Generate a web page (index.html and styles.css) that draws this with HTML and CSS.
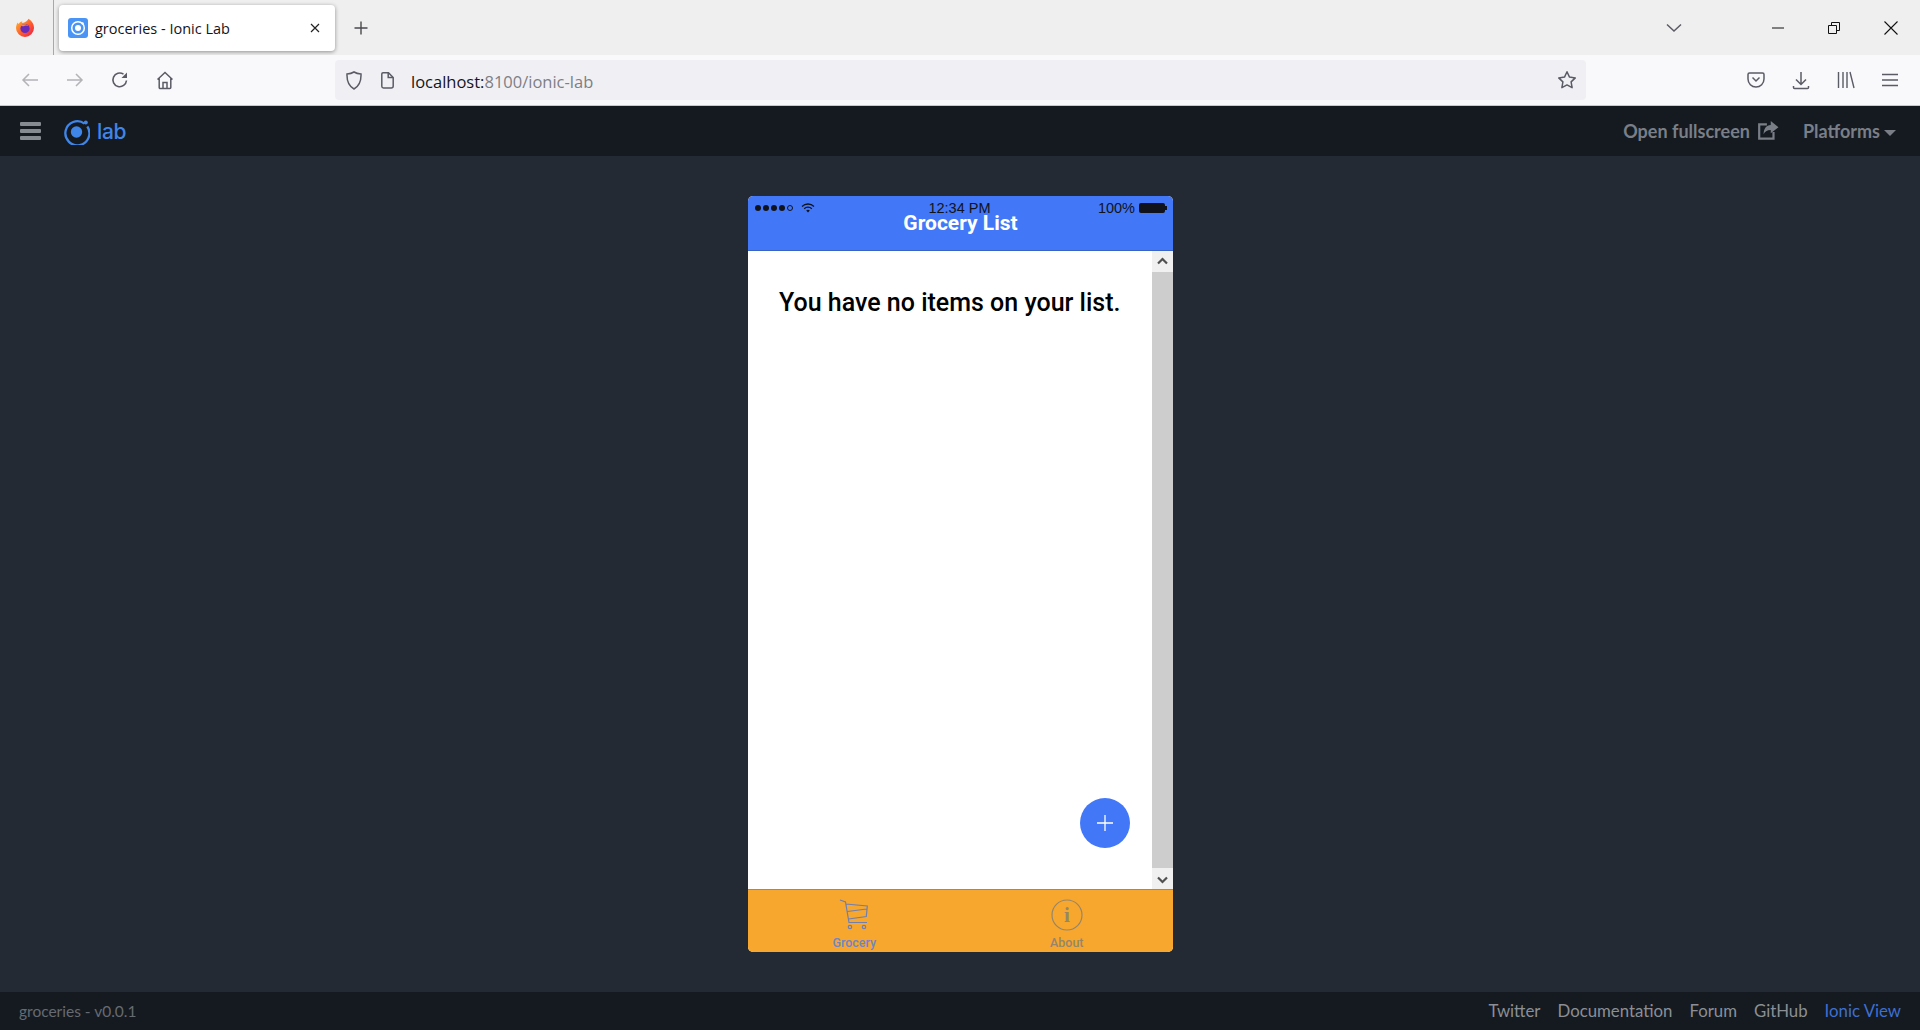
FILE: index.html
```html
<!DOCTYPE html>
<html lang="en">
<head>
    <meta charset="UTF-8">
    <meta name="viewport" content="width=device-width, initial-scale=1.0">
    <title>groceries - Ionic Lab</title>
    <link rel="stylesheet" href="styles.css">
</head>
<body>
    <div class="tabstrip">
        <div class="ff-slot">
            <svg width="20" height="20" viewBox="0 0 20 20">
                <defs>
                    <linearGradient id="ffg" x1="0" y1="0" x2="1" y2="1">
                        <stop offset="0" stop-color="#ffbd2e"/>
                        <stop offset="0.55" stop-color="#ff5a2c"/>
                        <stop offset="1" stop-color="#e5194f"/>
                    </linearGradient>
                </defs>
                <path d="M13.5 .8c2.600 1.500 5.500 4.700 5.500 9.200a9 9 0 0 1-18 0c0-2.200.8-4.400 1.800-5.600l.6 1.700c.9-1.400 2.300-2.400 4-2.900-.5.8-.6 1.400-.5 1.900 1.900-.5 4.700-.8 6.600-4.300z" fill="url(#ffg)"/>
                <circle cx="10" cy="10.500" r="4.600" fill="#6a2bb8"/>
                <path d="M5.500 8c2-2.300 6-2.500 8 0-2-.9-3.500-.8-5 .2z" fill="#ff8a1f"/>
            </svg>
        </div>
        <div class="tab">
            <svg class="tab-icon" width="20" height="20" viewBox="0 0 20 20">
                <rect width="20" height="20" rx="3" fill="#4a94f5"/>
                <circle cx="10" cy="10" r="6.300" fill="none" stroke="#fff" stroke-width="1.500"/>
                <circle cx="10" cy="10" r="3" fill="#fff"/>
                <circle cx="14.600" cy="5.400" r="1.200" fill="#fff"/>
            </svg>
            <span class="tab-title">groceries - Ionic Lab</span>
            <svg class="tab-close" width="12" height="12" viewBox="0 0 12 12"><path d="M2 2l8 8M10 2l-8 8" stroke="#222" stroke-width="1.200"/></svg>
        </div>
        <svg class="new-tab" width="16" height="16" viewBox="0 0 16 16"><path d="M8 1.500v13M1.500 8h13" stroke="#4a4a4f" stroke-width="1.400"/></svg>
        <div class="strip-space"></div>
        <svg class="tab-list" width="16" height="10" viewBox="0 0 16 10"><path d="M1 1.500l7 6.500 7-6.500" fill="none" stroke="#5b5b66" stroke-width="1.500"/></svg>
        <div class="win-btns">
            <svg width="12" height="12" viewBox="0 0 12 12"><path d="M0 6h12" stroke="#111" stroke-width="1"/></svg>
            <svg width="12" height="12" viewBox="0 0 12 12"><path d="M.5 3.500h8v8h-8zM3.500 3.500v-3h8v8h-3" fill="none" stroke="#111" stroke-width="1"/></svg>
            <svg width="14" height="14" viewBox="0 0 14 14"><path d="M.5 .5l13 13M13.500 .5l-13 13" stroke="#111" stroke-width="1.100"/></svg>
        </div>
    </div>

    <div class="navbar">
        <div class="nav-btns">
            <svg class="dim" width="18" height="16" viewBox="0 0 18 16"><path d="M17 8H2M8 2L2 8l6 6" fill="none" stroke="#b3b3b8" stroke-width="1.500"/></svg>
            <svg class="dim" width="18" height="16" viewBox="0 0 18 16"><path d="M1 8h15M10 2l6 6-6 6" fill="none" stroke="#b3b3b8" stroke-width="1.500"/></svg>
            <svg width="18" height="18" viewBox="0 0 18 18"><path d="M15.500 9.500A6.800 6.800 0 1 1 12.500 3.200" fill="none" stroke="#5b5b66" stroke-width="1.600"/><path d="M16 1.500v5.500h-5.500z" fill="#5b5b66"/></svg>
            <svg width="18" height="19" viewBox="0 0 18 19"><path d="M1.500 8.500L9 1.500l7.500 7M3.200 7.500v9a1 1 0 0 0 1 1h9.600a1 1 0 0 0 1-1v-9M7 17.500v-6h4v6" fill="none" stroke="#5b5b66" stroke-width="1.500"/></svg>
        </div>
        <div class="urlbar">
            <svg class="shield" width="16" height="19" viewBox="0 0 16 19"><path d="M8 1c2 1.300 4.300 1.900 7 2 .3 7-1.800 12-7 15C2.800 15 .7 10 1 3c2.700-.1 5-.7 7-2z" fill="none" stroke="#5b5b66" stroke-width="1.500"/></svg>
            <svg class="pageicon" width="13" height="17" viewBox="0 0 13 17"><path d="M2 .8h5.500L12.200 5.500V14a2 2 0 0 1-2 2H2.500a1.700 1.700 0 0 1-1.700-1.700V2A1.200 1.200 0 0 1 2 .8z" fill="none" stroke="#5b5b66" stroke-width="1.500"/><path d="M7.200 1v4.500h4.800" fill="none" stroke="#5b5b66" stroke-width="1.500"/></svg>
            <span class="url"><span class="host">localhost:</span>8100/ionic-lab</span>
            <svg class="star" width="20" height="20" viewBox="0 0 20 20"><path d="M10 1.800l2.500 5.300 5.800.8-4.200 4 1 5.800-5.100-2.800-5.100 2.800 1-5.800-4.200-4 5.800-.8z" fill="none" stroke="#5b5b66" stroke-width="1.500" stroke-linejoin="round"/></svg>
        </div>
        <div class="tool-btns">
            <svg width="18" height="16" viewBox="0 0 18 16"><path d="M2.500 1h13A1.500 1.500 0 0 1 17 2.500V7a8 8 0 0 1-16 0V2.500A1.500 1.500 0 0 1 2.500 1z" fill="none" stroke="#5b5b66" stroke-width="1.500"/><path d="M5.500 5.500L9 9l3.500-3.500" fill="none" stroke="#5b5b66" stroke-width="1.500"/></svg>
            <svg width="18" height="19" viewBox="0 0 18 19"><path d="M9 1v12M4 8.500l5 5 5-5M1.500 15v1.500a1 1 0 0 0 1 1h13a1 1 0 0 0 1-1V15" fill="none" stroke="#5b5b66" stroke-width="1.500"/></svg>
            <svg width="18" height="18" viewBox="0 0 18 18"><path d="M1.500 1v16M6 1v16M10 1v16M13 1l4 16" fill="none" stroke="#5b5b66" stroke-width="1.400"/></svg>
            <svg width="16" height="14" viewBox="0 0 16 14"><path d="M0 1.500h16M0 7h16M0 12.500h16" stroke="#5b5b66" stroke-width="1.400"/></svg>
        </div>
    </div>

    <header class="lab-header">
        <div class="burger"><span></span><span></span><span></span></div>
        <svg class="lab-logo" width="27" height="27" viewBox="0 0 27 27">
            <path d="M21.500 5.600A12 12 0 1 0 24.300 8.500" fill="none" stroke="#3f86e8" stroke-width="2.300"/>
            <circle cx="13.500" cy="14" r="5.700" fill="#3f86e8"/>
            <circle cx="22.800" cy="4.500" r="2" fill="#3f86e8"/>
        </svg>
        <span class="lab-word">lab</span>
        <div class="header-right">
            <span class="head-link">Open fullscreen
                <svg width="22" height="20" viewBox="0 0 20 18"><path d="M9 3H2v13h13v-6" fill="none" stroke="#7a7f87" stroke-width="2"/><path d="M12.500 0l7 5.500-7 5.500V8C9 8 7 9.500 6 12c0-5 2.500-8.500 6.500-8.500z" fill="#7a7f87"/></svg>
            </span>
            <span class="head-link">Platforms<i class="caret"></i></span>
        </div>
    </header>

    <main class="stage">
        <div class="device">
            <div class="status-bar">
                <span class="signal"><i></i><i></i><i></i><i></i><i class="off"></i>
                    <svg width="14" height="10" viewBox="0 0 14 10"><path d="M1 3.500a8.500 8.500 0 0 1 12 0M3.200 5.700a5.400 5.400 0 0 1 7.600 0" fill="none" stroke="#10131c" stroke-width="1.300"/><path d="M5.200 7.600a2.600 2.600 0 0 1 3.600 0L7 9.500z" fill="#10131c"/></svg>
                </span>
                <span class="clock">12:34 PM</span>
                <span class="battery">100%<i class="batt"></i></span>
            </div>
            <div class="dev-title">Grocery List</div>
            <div class="dev-content">
                <div class="page">
                    <h2 class="empty-msg">You have no items on your list.</h2>
                    <div class="fab"><svg width="16" height="16" viewBox="0 0 16 16"><path d="M8 0v16M0 8h16" stroke="#fff" stroke-width="1.300"/></svg></div>
                </div>
                <div class="scrollbar">
                    <div class="sb-btn"><svg width="11" height="8" viewBox="0 0 11 8"><path d="M1 6.500l4.500-4.500 4.500 4.500" fill="none" stroke="#505050" stroke-width="2.200"/></svg></div>
                    <div class="sb-thumb"></div>
                    <div class="sb-btn"><svg width="11" height="8" viewBox="0 0 11 8"><path d="M1 1.500l4.500 4.500 4.500-4.500" fill="none" stroke="#505050" stroke-width="2.200"/></svg></div>
                </div>
            </div>
            <nav class="dev-tabs">
                <div class="dev-tab active">
                    <svg width="32" height="32" viewBox="0 0 32 32"><path d="M2 1l5.500 2 3.500 20.500h18M7.800 5l21.500 2-1 10.500L10.500 20M9.300 12.500l19.500-2.500" fill="none" stroke="#6f7fb0" stroke-width="1.200"/><circle cx="12" cy="28" r="1.700" fill="none" stroke="#6f7fb0" stroke-width="1.200"/><circle cx="26" cy="28" r="1.700" fill="none" stroke="#6f7fb0" stroke-width="1.200"/></svg>
                    <span>Grocery</span>
                </div>
                <div class="dev-tab">
                    <svg width="32" height="32" viewBox="0 0 32 32"><circle cx="16" cy="16" r="15" fill="none" stroke="#95866a" stroke-width="1.200"/><text x="16" y="23" text-anchor="middle" class="info-i">i</text></svg>
                    <span>About</span>
                </div>
            </nav>
        </div>
    </main>

    <footer class="lab-footer">
        <span class="version">groceries - v0.0.1</span>
        <div class="foot-links">
            <span>Twitter</span>
            <span>Documentation</span>
            <span>Forum</span>
            <span>GitHub</span>
            <span class="ionic-view">Ionic View</span>
        </div>
    </footer>
</body>
</html>
```

FILE: styles.css
```css
* {
    box-sizing: border-box;
}
html, body {
    height: 100%;
}
body {
    margin: 0;
    height: 1030px;
    overflow: hidden;
    display: flex;
    flex-direction: column;
    background-color: #232a33;
    font-family: "Open Sans", sans-serif;
}
svg {
    display: block;
    flex: none;
}

/* browser chrome */
.tabstrip {
    height: 55px;
    background-color: #efefef;
    display: flex;
    align-items: center;
}
.ff-slot {
    width: 54px;
    height: 55px;
    border-right: 1px solid #a8a8a8;
    padding-left: 15px;
    display: flex;
    align-items: center;
}
.tab {
    width: 276px;
    height: 46px;
    margin-left: 5px;
    margin-top: 1px;
    background-color: #fff;
    border-radius: 4px;
    box-shadow: 0 1px 4px rgba(0, 0, 0, 0.4);
    display: flex;
    align-items: center;
    padding-left: 9px;
}
.tab-title {
    margin-left: 7px;
    font-size: 14.5px;
    color: #15141a;
    flex: 1;
}
.tab-close {
    margin-right: 14px;
}
.new-tab {
    margin-left: 18px;
}
.strip-space {
    flex: 1;
}
.tab-list {
    margin-right: 90px;
}
.win-btns {
    display: flex;
    align-items: center;
    gap: 44px;
    padding-right: 22px;
}
.navbar {
    height: 51px;
    background-color: #f9f9fb;
    border-bottom: 1px solid #c9c9cc;
    display: flex;
    align-items: center;
}
.nav-btns {
    width: 335px;
    padding-left: 21px;
    display: flex;
    align-items: center;
    gap: 27px;
}
.urlbar {
    width: 1251px;
    height: 40px;
    background-color: #f0f0f4;
    border-radius: 4px;
    display: flex;
    align-items: center;
    padding-left: 11px;
}
.pageicon {
    margin-left: 19px;
}
.url {
    margin-left: 17px;
    padding-top: 2px;
    font-size: 16.5px;
    color: #7e7e85;
    flex: 1;
}
.host {
    color: #15141a;
}
.star {
    margin-right: 9px;
}
.tool-btns {
    flex: 1;
    display: flex;
    align-items: center;
    justify-content: flex-end;
    gap: 27px;
    padding-right: 22px;
}

/* ionic lab header */
.lab-header {
    height: 50px;
    background-color: #151a21;
    display: flex;
    align-items: center;
    padding-left: 20px;
    padding-right: 24px;
}
.burger {
    width: 21px;
    display: flex;
    flex-direction: column;
    gap: 3px;
}
.burger span {
    height: 4px;
    border-radius: 1px;
    background-color: #868b92;
}
.lab-logo {
    margin-left: 22px;
}
.lab-word {
    margin-left: 7px;
    font-family: "Inter", sans-serif;
    font-size: 21px;
    font-weight: 500;
    color: #3f86e8;
    letter-spacing: -0.3px;
}
.header-right {
    margin-left: auto;
    display: flex;
    align-items: center;
    gap: 24px;
}
.head-link {
    font-family: "Lato", sans-serif;
    font-size: 18px;
    font-weight: 700;
    color: #7a7f87;
    display: flex;
    align-items: center;
    gap: 7px;
}
.caret {
    width: 0;
    height: 0;
    margin-left: -3px;
    margin-top: 4px;
    border-left: 6px solid transparent;
    border-right: 6px solid transparent;
    border-top: 6px solid #7a7f87;
}

/* device preview */
.stage {
    flex: 1;
    padding-top: 40px;
    display: flex;
    justify-content: center;
}
.device {
    position: relative;
    left: 0.5px;
    width: 425px;
    height: 756px;
    border-radius: 5px;
    overflow: hidden;
    display: flex;
    flex-direction: column;
    background-color: #fff;
}
.status-bar {
    position: absolute;
    top: 2px;
    left: 0;
    right: 0;
    height: 20px;
    padding: 0 8px 0 7px;
    display: flex;
    justify-content: space-between;
    align-items: center;
    font-family: "Liberation Sans", sans-serif;
    font-size: 14.5px;
    color: #10131c;
}
.signal {
    width: 100px;
    display: flex;
    align-items: center;
    gap: 2px;
}
.signal i {
    width: 6px;
    height: 6px;
    border-radius: 50%;
    background-color: #10131c;
}
.signal i.off {
    background-color: transparent;
    border: 1px solid #10131c;
}
.signal svg {
    margin-left: 6px;
}
.clock {
    margin-left: -1px;
}
.battery {
    width: 100px;
    display: flex;
    justify-content: flex-end;
    align-items: center;
    gap: 4px;
}
.batt {
    position: relative;
    width: 26px;
    height: 10px;
    border-radius: 2px;
    background-color: #10131c;
}
.batt::after {
    content: "";
    position: absolute;
    right: -2px;
    top: 3px;
    width: 2px;
    height: 4px;
    background-color: #10131c;
}
.dev-title {
    height: 55px;
    padding-top: 14px;
    background-color: #4277f8;
    border-bottom: 1px solid #3a64c4;
    font-family: Roboto, sans-serif;
    font-size: 21px;
    font-weight: 700;
    line-height: 27px;
    color: #fff;
    text-align: center;
}
.dev-content {
    flex: 1;
    display: flex;
    min-height: 0;
}
.page {
    flex: 1;
    position: relative;
    padding: 36px 0 0 31px;
}
.empty-msg {
    margin: 0;
    font-family: Roboto, sans-serif;
    font-size: 25px;
    font-weight: 500;
    line-height: 31px;
    color: #000;
    white-space: nowrap;
}
.fab {
    position: absolute;
    right: 22px;
    bottom: 41px;
    width: 50px;
    height: 50px;
    border-radius: 50%;
    background-color: #4277f8;
    display: flex;
    align-items: center;
    justify-content: center;
}
.scrollbar {
    width: 21px;
    display: flex;
    flex-direction: column;
}
.sb-btn {
    height: 21px;
    background-color: #f0f0f0;
    display: flex;
    align-items: center;
    justify-content: center;
}
.sb-btn:first-child {
    padding-bottom: 2px;
}
.sb-btn:last-child {
    padding-top: 2px;
}
.sb-thumb {
    flex: 1;
    background-color: #cdcdcd;
}
.dev-tabs {
    height: 63px;
    background-color: #f8a72e;
    border-top: 1px solid #a98a50;
    display: flex;
}
.dev-tab {
    flex: 1;
    padding-top: 9px;
    display: flex;
    flex-direction: column;
    align-items: center;
    font-family: Roboto, sans-serif;
    font-size: 12.5px;
    font-weight: 500;
    line-height: 14px;
    color: #95866a;
}
.dev-tab span {
    margin-top: 5px;
}
.dev-tab.active {
    color: #6f86c4;
}
.info-i {
    font-family: "Liberation Serif", serif;
    font-size: 21px;
    font-weight: 700;
    fill: #95866a;
}

/* footer */
.lab-footer {
    height: 38px;
    padding-bottom: 1px;
    background-color: #151a21;
    display: flex;
    align-items: center;
    justify-content: space-between;
    padding-left: 19px;
    padding-right: 19px;
    font-family: "Lato", sans-serif;
    font-size: 16.8px;
    color: #8b8f95;
}
.version {
    color: #666b72;
    font-size: 15.5px;
}
.foot-links {
    display: flex;
    gap: 17px;
}
.ionic-view {
    color: #3e6fd0;
}
```
